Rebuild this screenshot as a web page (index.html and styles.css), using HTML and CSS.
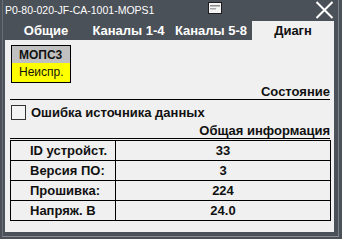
FILE: index.html
```html
<!DOCTYPE html>
<html>
<head>
<meta charset="utf-8">
<link rel="stylesheet" href="styles.css">
</head>
<body>
<div class="window">
  <div class="frame">
    <div class="titlebar">
      <span class="title">P0-80-020-JF-CA-1001-MOPS1</span>
      <svg class="min-icon" width="14" height="12" viewBox="0 0 14 12">
        <rect x="0.5" y="0.5" width="13" height="11" fill="#f4f4f4" stroke="#1e1e1e"/>
        <rect x="2" y="3" width="10" height="1.5" fill="#8a8a8a"/>
        <rect x="2" y="6" width="6" height="1.5" fill="#a8a8a8"/>
      </svg>
      <svg class="close-icon" width="19" height="18" viewBox="0 0 19 18">
        <path d="M1.5 1 L17.5 17 M17.5 1 L1.5 17" stroke="#ffffff" stroke-width="2" fill="none"/>
      </svg>
    </div>
    <div class="tabs">
      <div class="tab">Общие</div>
      <div class="tab">Каналы 1-4</div>
      <div class="tab">Каналы 5-8</div>
      <div class="tab active">Диагн</div>
    </div>
    <div class="panel">
      <div class="module">
        <div class="module-head">МОПС3</div>
        <div class="module-state">Неиспр.</div>
      </div>
      <div class="section-title">Состояние</div>
      <div class="check-row">
        <span class="checkbox"></span>
        <span class="check-label">Ошибка источника данных</span>
      </div>
      <div class="section-title info">Общая информация</div>
      <div class="info-table">
        <div class="row"><div class="lbl">ID устройст.</div><div class="val">33</div></div>
        <div class="row"><div class="lbl">Версия ПО:</div><div class="val">3</div></div>
        <div class="row"><div class="lbl">Прошивка:</div><div class="val">224</div></div>
        <div class="row"><div class="lbl">Напряж. В</div><div class="val">24.0</div></div>
      </div>
    </div>
  </div>
</div>
</body>
</html>
```
FILE: styles.css
```css
html, body {
  margin: 0;
  padding: 0;
  background: #4b5158;
}
body {
  font-family: "Liberation Sans", Arial, sans-serif;
}
.window {
  width: 342px;
  height: 239px;
  background: #4b5158;
  overflow: hidden;
  padding: 0 3px 2px 2px;
  box-sizing: border-box;
}
.frame {
  height: 237px;
  border-left: 1px solid #6a6f76;
  border-right: 1px solid #7c8086;
  border-bottom: 1px solid #8a8d92;
  box-sizing: border-box;
}
.titlebar {
  height: 19px;
  display: flex;
  align-items: center;
}
.title {
  color: #ffffff;
  font-size: 10.5px;
  padding-left: 2px;
  width: 203px;
  white-space: nowrap;
}
.min-icon {
  display: block;
  margin-top: -3px;
}
.close-icon {
  display: block;
  margin-left: 93px;
  margin-top: 1px;
}
.tabs {
  height: 21px;
  display: flex;
  padding-left: 2px;
}
.tab {
  width: 82px;
  color: #ffffff;
  font-size: 13px;
  font-weight: bold;
  text-align: center;
  line-height: 21px;
  padding-top: 1px;
  box-sizing: border-box;
  white-space: nowrap;
}
.tab:nth-child(2) {
  width: 83px;
}
.tab.active {
  background: #f0f0f0;
  color: #111111;
  margin-top: 2px;
  height: 19px;
  line-height: 19px;
  padding-top: 0;
}
.panel {
  margin-left: 2px;
  width: 329px;
  height: 192px;
  background: #f0f0f0;
  padding: 5px 4px 0 5px;
  box-sizing: border-box;
}
.module {
  width: 60px;
  margin-left: 1px;
  border: 1px solid #000000;
  box-sizing: border-box;
}
.module-head {
  background: #c0c0c0;
  height: 17px;
  line-height: 18px;
  font-size: 12px;
  font-weight: bold;
  padding-left: 7px;
  color: #111;
}
.module-state {
  background: #ffff00;
  height: 19px;
  line-height: 19px;
  font-size: 12px;
  padding-left: 7px;
  color: #111;
}
.section-title {
  border-bottom: 1px solid #000000;
  text-align: right;
  font-size: 13px;
  font-weight: bold;
  line-height: 15px;
  padding-top: 1px;
  box-sizing: border-box;
  height: 17px;
  color: #111;
}
.check-row {
  display: flex;
  align-items: center;
  height: 22px;
  margin-top: 1px;
}
.checkbox {
  width: 15px;
  height: 15px;
  margin-left: 1px;
  border: 1px solid #333333;
  background: #f4f4f4;
  box-sizing: border-box;
}
.check-label {
  margin-left: 5px;
  font-size: 13px;
  font-weight: bold;
  color: #111;
}
.section-title.info {
  height: 16px;
  padding-top: 0;
  line-height: 15px;
  margin-bottom: 1px;
}
.info-table {
  width: 321px;
  border: 1px solid #000;
  border-bottom: none;
  box-sizing: border-box;
}
.row {
  display: grid;
  grid-template-columns: 105px 1fr;
  height: 20px;
  border-bottom: 1px solid #000;
  box-sizing: border-box;
  font-size: 13px;
  font-weight: bold;
  color: #111;
  line-height: 19px;
}
.lbl {
  padding-left: 19px;
  border-right: 1px solid #000;
  white-space: nowrap;
}
.val {
  text-align: center;
}
```
